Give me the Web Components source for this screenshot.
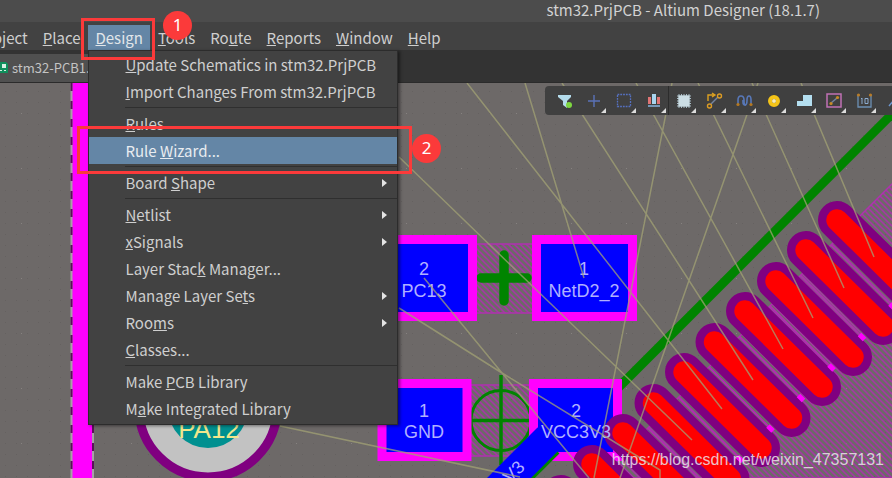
<!DOCTYPE html>
<html lang="en">
<head>
<meta charset="utf-8">
<title>stm32.PrjPCB - Altium Designer (18.1.7)</title>
<style>
  html, body { margin: 0; height: 100%; overflow: hidden; }
  body { font: 15px/20px "Noto Sans CJK SC", "Noto Sans", sans-serif; color: #cfcfcf; background: #333; }
</style>
</head>
<body>
<designer-app></designer-app>

<template id="t-app">
  <style>
    :host { display: flex; flex-direction: column; height: 100vh; position: relative; overflow: hidden; }
    board-view { flex: 1; min-height: 0; }
    call-out { position: absolute; z-index: 5; }
    .one { left: 81px; top: 18px; width: 74px; height: 42px; --bx: 82px; --by: -7px; }
    .two { left: 77px; top: 126px; width: 335px; height: 48px; --bx: 335px; --by: 8px; }
  </style>
  <title-bar>stm32.PrjPCB - Altium Designer (18.1.7)</title-bar>
  <menu-bar></menu-bar>
  <tab-strip>stm32-PCB1.</tab-strip>
  <board-view></board-view>
  <call-out class="one">1</call-out>
  <call-out class="two">2</call-out>
</template>

<template id="t-title">
  <style>
    :host { display: flex; justify-content: flex-end; align-items: center; height: 22px; padding: 0 72px 2px 0; box-sizing: border-box; background: #4c4c4c; color: #d2d2d2; white-space: nowrap; }
  </style>
  <slot></slot>
</template>

<template id="t-bar">
  <style>
    :host { display: flex; height: 28px; background: #424242; position: relative; z-index: 3; }
    nav { display: flex; align-items: flex-start; gap: 1px; padding-top: 3px; box-sizing: border-box; margin-left: -14px; }
    .holder { position: relative; }
  </style>
  <nav aria-label="Main menu">
    <bar-item>oject</bar-item>
    <bar-item><u>P</u>lace</bar-item>
    <div class="holder"><bar-item active><u>D</u>esign</bar-item><drop-menu></drop-menu></div>
    <bar-item><u>T</u>ools</bar-item>
    <bar-item>Ro<u>u</u>te</bar-item>
    <bar-item><u>R</u>eports</bar-item>
    <bar-item><u>W</u>indow</bar-item>
    <bar-item><u>H</u>elp</bar-item>
  </nav>
</template>

<template id="t-baritem">
  <style>
    :host { display: block; }
    button { font: inherit; color: #cfcfcf; background: none; border: 0; margin: 0; padding: 0 7px; height: 25px; display: block; white-space: nowrap; }
    :host([active]) button { background: #6486a6; color: #e2e6ea; }
  </style>
  <button type="button"><slot></slot></button>
</template>

<template id="t-drop">
  <style>
    :host { display: block; position: absolute; left: 0; top: 25px; width: 310px; box-sizing: border-box; padding: 0 0 2px; border: 1px solid #2c2c2c; background: #424242; box-shadow: 2px 1px 3px rgba(0,0,0,.45); }
    hr { border: 0; height: 1px; margin: 2px 0 2px 36px; background: #2f2f2f; }
  </style>
  <drop-item><u>U</u>pdate Schematics in stm32.PrjPCB</drop-item>
  <drop-item><u>I</u>mport Changes From stm32.PrjPCB</drop-item>
  <hr>
  <drop-item><u>R</u>ules</drop-item>
  <drop-item active>Rule <u>W</u>izard...</drop-item>
  <hr>
  <drop-item sub>Board <u>S</u>hape</drop-item>
  <hr>
  <drop-item sub><u>N</u>etlist</drop-item>
  <drop-item sub><u>x</u>Signals</drop-item>
  <drop-item>Layer Stac<u>k</u> Manager...</drop-item>
  <drop-item sub>Manage Layer Se<u>t</u>s</drop-item>
  <drop-item sub>Roo<u>m</u>s</drop-item>
  <drop-item><u>C</u>lasses...</drop-item>
  <hr>
  <drop-item>Make <u>P</u>CB Library</drop-item>
  <drop-item>M<u>a</u>ke Integrated Library</drop-item>
</template>

<template id="t-dropitem">
  <style>
    :host { display: block; }
    button { display: flex; justify-content: space-between; align-items: center; width: 100%; height: 27px; margin: 0; padding: 0 10px 0 36px; border: 0; background: none; font: inherit; color: #cfcfcf; text-align: left; white-space: nowrap; }
    :host([active]) button { background: #6486a6; color: #e8ecf0; }
    i { display: none; border: solid transparent; border-width: 4px 0 4px 5px; border-left-color: #e4e4e4; }
    :host([sub]) i { display: block; }
  </style>
  <button type="button"><span><slot></slot></span><i></i></button>
</template>

<template id="t-tabs">
  <style>
    :host { display: flex; align-items: flex-end; height: 33px; background: #333; box-sizing: border-box; border-bottom: 1px solid #2b2b2b; }
    button { display: flex; align-items: center; gap: 4px; height: 28px; width: 120px; padding: 0; margin: 0; border: 0; background: #505050; font: inherit; font-size: 13px; color: #c4c4c4; }
  </style>
  <button type="button">
    <svg width="8" height="14" aria-hidden="true"><path d="M0 1h6l2 2v9H0z" fill="#0f8f5c"/><path d="M2 3h4v4H2zM0 9h2v1H0zM4 9h2v1H4z" fill="#d7f0e4"/></svg>
    <slot></slot>
  </button>
</template>

<template id="t-callout">
  <style>
    :host { display: block; box-sizing: border-box; border: 3px solid #fb3a3a; pointer-events: none; }
    span { position: absolute; left: var(--bx); top: var(--by); margin: -3px; width: 29px; height: 29px; border-radius: 50%; background: #fb3a3a; color: #fff; font: 17px/27px "Noto Sans", sans-serif; text-align: center; }
  </style>
  <span><slot></slot></span>
</template>

<template id="t-tools">
  <style>
    :host { display: flex; padding-left: 4px; background: #404040; border-radius: 4px 0 0 4px; }
    button { width: 30px; height: 29px; padding: 0; margin: 0; border: 0; background: none; display: block; box-sizing: border-box; }
    svg { display: block; }
    .sep { box-shadow: -1px 0 #2c2c2c; }
  </style>
  <button type="button" aria-label="Filter"><svg width="30" height="29"><path d="M9 9h13v2l-4 4v7l-4-3v-4l-5-4z" fill="#b4dcec"/><circle cx="20" cy="19" r="3" fill="#7ed840"/></svg></button>
  <button type="button" aria-label="Cross"><svg width="30" height="29"><path d="M15 9v12M9 15h12" stroke="#5a72b8" stroke-width="1.4"/><path d="M27 22v5h-5z" fill="#dcdcdc"/></svg></button>
  <button type="button" aria-label="Select area"><svg width="30" height="29"><rect x="8.500" y="8.500" width="13" height="12" fill="none" stroke="#5570c0" stroke-width="1.3" stroke-dasharray="1.800 1"/><path d="M27 22v5h-5z" fill="#dcdcdc"/></svg></button>
  <button type="button" aria-label="Align"><svg width="30" height="29"><path d="M9 11h3v7H9zM18 11h3v7h-3z" fill="#e07474"/><path d="M13 8h4v10h-4z" fill="#a8d4ee"/><path d="M9 20h12" stroke="#88b4e0" stroke-width="1.500"/><path d="M27 22v5h-5z" fill="#dcdcdc"/></svg></button>
  <button type="button" class="sep" aria-label="Component"><svg width="30" height="29"><path d="M10 8v14M12.500 8v14M15 8v14M17.500 8v14M20 8v14M8 10h14M8 12.500h14M8 15h14M8 17.500h14M8 20h14" stroke="#a8bcc6"/><rect x="9.500" y="9.500" width="11" height="11" fill="#cbdde4"/><path d="M27 22v5h-5z" fill="#dcdcdc"/></svg></button>
  <button type="button" aria-label="Route"><svg width="30" height="29"><path d="M9 15V9h6M13 7l3 2-3 2" fill="none" stroke="#dca020" stroke-width="1.400"/><path d="M12 18l7-7" stroke="#7484a0" stroke-width="1.500"/><circle cx="20.500" cy="10" r="2" fill="none" stroke="#dc9c24" stroke-width="1.400"/><circle cx="10.500" cy="20" r="2" fill="none" stroke="#dc9c24" stroke-width="1.400"/><path d="M27 22v5h-5z" fill="#dcdcdc"/></svg></button>
  <button type="button" aria-label="Tune"><svg width="30" height="29"><path d="M9 18v-4q0-4 3-4t3 4v2q0 3 2 3" fill="none" stroke="#5878b8" stroke-width="1.600"/><path d="M14 14v2q0 3 2 3t2-5q0-4 2-4t2 4v4" fill="none" stroke="#5878b8" stroke-width="1.600"/><circle cx="9" cy="18.500" r="1.600" fill="#b47820"/><circle cx="22" cy="18.500" r="1.600" fill="#b47820"/><path d="M27 22v5h-5z" fill="#dcdcdc"/></svg></button>
  <button type="button" aria-label="Via"><svg width="30" height="29"><circle cx="15" cy="15" r="4" fill="#444" stroke="#f4c418" stroke-width="4"/><circle cx="15" cy="15" r="2" fill="#fbeeb4"/><path d="M27 22v5h-5z" fill="#dcdcdc"/></svg></button>
  <button type="button" aria-label="Polygon"><svg width="30" height="29"><path d="M14 9h9v11H8v-5h6z" fill="#b4dff0"/><path d="M27 22v5h-5z" fill="#dcdcdc"/></svg></button>
  <button type="button" aria-label="Line"><svg width="30" height="29"><rect x="8" y="8" width="14" height="13" fill="none" stroke="#c070b4" stroke-width="1.500"/><path d="M12 17l6-5" stroke="#7484a0" stroke-width="1.500"/><circle cx="12" cy="17.500" r="1.600" fill="#c88a24"/><circle cx="18.500" cy="11.500" r="1.600" fill="#c88a24"/><path d="M27 22v5h-5z" fill="#dcdcdc"/></svg></button>
  <button type="button" aria-label="Dimension"><svg width="30" height="29"><path d="M9 9v12h13V9" fill="none" stroke="#6c90b4" stroke-width="1.300"/><path d="M13 12v6M12 13l1-1M16 12.500h3v5h-3z" fill="none" stroke="#8cacd0"/><circle cx="9.500" cy="9" r="1.600" fill="#b87c28"/><circle cx="21.500" cy="9" r="1.600" fill="#b87c28"/><path d="M27 22v5h-5z" fill="#dcdcdc"/></svg></button>
  <button type="button" aria-label="Draw line"><svg width="30" height="29"><path d="M10 20L19 9" stroke="#6c94cc" stroke-width="1.500"/></svg></button>
</template>

<template id="t-board">
  <style>
    :host { display: block; position: relative; overflow: hidden; background: #6d6968; }
    .board { display: block; width: 100%; height: 100%; }
    tool-palette { position: absolute; top: 3px; right: -17px; }
    .pad { fill: #00f; stroke: #f0f; stroke-width: 9; }
    .net { font: 18px "Liberation Sans", sans-serif; fill: #b0b0ff; text-anchor: middle; }
    .rats { fill: none; stroke: #a2a274; stroke-width: 1.5; stroke-opacity: .75; }
    .green { fill: none; stroke: #008400; }
    .mark { position: absolute; right: 8px; bottom: 8px; font: 16px/20px "Liberation Sans", sans-serif; color: rgba(235,228,235,.85); }
  </style>
  <svg class="board" role="img" aria-label="PCB layout">
    <defs>
      <pattern id="dots" width="11" height="11" patternUnits="userSpaceOnUse"><rect x="5" y="3" width="1" height="1" fill="#656160"/></pattern>
      <pattern id="stars" width="55" height="55" patternUnits="userSpaceOnUse" x="405" y="112"><rect width="1" height="1" x="1" y="1" fill="#868280"/></pattern>
      <pattern id="hatch" width="6" height="6" patternUnits="userSpaceOnUse"><path d="M-1-1L7 7M-1 5l2 2M5-1l2 2" stroke="#a834a8" stroke-width="1.500"/></pattern>
      <g id="pill"><path d="M0 0l77 76" stroke="#800080" stroke-width="38"/><path d="M0 0l77 76" stroke="#f00" stroke-width="21.500"/></g>
      <g id="gap"><path d="M0 0l62 62" stroke="#b030b0" stroke-width="1.800"/><path d="M59 59l5 5" stroke="#f0f" stroke-width="5"/></g>
    </defs>
    <g transform="translate(0 -83)">
      <rect y="83" width="100%" height="100%" fill="url(#dots)"/>
      <rect y="83" width="100%" height="100%" fill="url(#stars)"/>
      <path d="M71.500 83h16.500v340h4.500v2000h-21z" fill="#f0f"/>
      <path d="M71.500 83v2000M93 425v2000" stroke="#a8a0a8" stroke-width="2"/>
      <path d="M71.500 83v2000M93 425v2000" stroke="#5a105a" stroke-width="2" stroke-dasharray="8 10"/>
      <circle cx="208" cy="408" r="69" fill="#c2c2c2" stroke="#800080" stroke-width="9"/>
      <circle cx="208" cy="408" r="40" fill="#009090"/>
      <text class="net" x="209" y="438" style="font-size:26px;fill:#f0e68c">PA12</text>

      <g fill="url(#hatch)" stroke="#b030b0" stroke-width="1.500">
        <rect x="474" y="244" width="62" height="69"/><rect x="468" y="385" width="66" height="71"/>
        <path d="M598 478L900 176V478z"/>
      </g>
      <path class="green" d="M481 278h46M504 255v46" stroke-width="9.500" stroke-linecap="round"/>
      <circle class="green" cx="501" cy="420.500" r="30" stroke-width="3"/>
      <path class="green" d="M501 375v90M470 420.500h62" stroke-width="3.500"/>
      <path class="green" d="M615 391L910 96" stroke-width="9"/>
      <rect class="pad" x="360" y="239.500" width="112.500" height="77"/>
      <rect class="pad" x="536.500" y="239.500" width="96" height="77"/>
      <rect class="pad" x="382" y="383.500" width="85" height="73"/>
      <rect class="pad" x="533.500" y="383.500" width="84" height="73"/>
      <path d="M558 452l-30 30" stroke="#008400" stroke-width="4"/>
      <path d="M537 428l20-14l10 28l-41 41h-44z" fill="#00f"/>

      <g stroke-linecap="round">
        <use href="#pill" x="837" y="220"/><use href="#pill" x="806" y="250"/><use href="#pill" x="776" y="281"/><use href="#pill" x="745" y="311"/><use href="#pill" x="714.500" y="342"/><use href="#pill" x="684" y="372"/><use href="#pill" x="653.500" y="403"/><use href="#pill" x="623" y="433"/><use href="#pill" x="592" y="464"/><use href="#pill" x="561" y="494"/>
      </g>
      <use href="#gap" x="831" y="245"/><use href="#gap" x="800.500" y="275.500"/><use href="#gap" x="770" y="306"/><use href="#gap" x="739.500" y="336.500"/><use href="#gap" x="709" y="367"/><use href="#gap" x="678.500" y="397.500"/><use href="#gap" x="648" y="428"/>

      <g class="net">
        <text x="424" y="275">2</text><text x="424" y="297">PC13</text>
        <text x="584" y="275">1</text><text x="584" y="297">NetD2_2</text>
        <text x="424" y="417">1</text><text x="424" y="438">GND</text>
        <text x="576" y="417">2</text><text x="576" y="438">VCC3V3</text>
        <text transform="translate(518 476) rotate(-45)">V3</text>
      </g>
      <path class="rats" d="M467 83L722 409M525 83L584 278M562 83L753 380M636 83L783 349M672 83L594 478M698 83L813 318M758 83L620 478M752 83L844 288M801 83L874 257M399 157L495 250L692 440M424 278L502 373L589 478M399 308L502 373L660 470V478M280 426L520 477"/>
    </g>
  </svg>
  <tool-palette></tool-palette>
  <span class="mark">https://blog.csdn.net/weixin_47357131</span>
</template>

<script>
  const define = (name, templateId) => {
    customElements.define(name, class extends HTMLElement {
      constructor() {
        super();
        this.attachShadow({ mode: 'open' })
          .append(document.getElementById(templateId).content.cloneNode(true));
      }
    });
  };
  define('title-bar', 't-title');
  define('bar-item', 't-baritem');
  define('drop-item', 't-dropitem');
  define('drop-menu', 't-drop');
  define('menu-bar', 't-bar');
  define('tab-strip', 't-tabs');
  define('call-out', 't-callout');
  define('tool-palette', 't-tools');
  define('board-view', 't-board');
  define('designer-app', 't-app');
</script>
</body>
</html>
